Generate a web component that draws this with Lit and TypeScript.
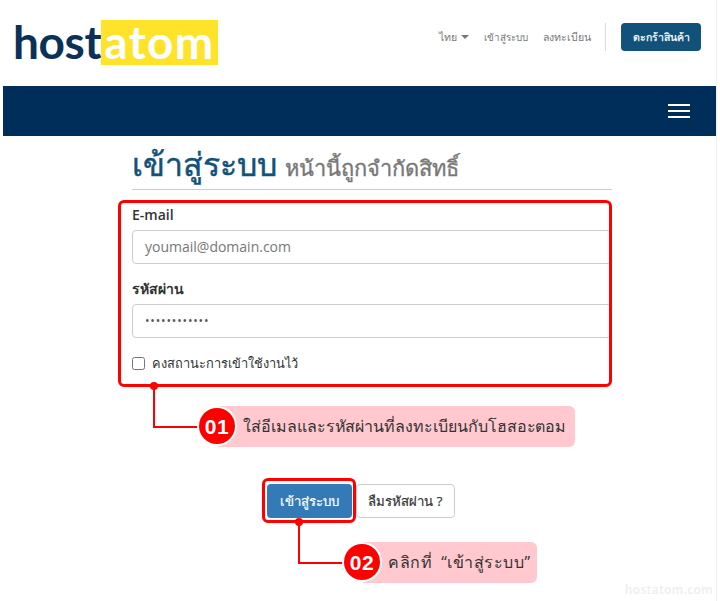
import { LitElement, css, html } from "lit";
import { customElement } from "lit/decorators.js";

@customElement("app-root")
export class AppRoot extends LitElement {
  static styles = css`
    :host {
      display: block;
      position: relative;
      width: 720px;
      height: 601px;
      overflow: hidden;
      background: #fff;
      font-family: "Open Sans", "Noto Sans", sans-serif;
      color: #333;
    }
    .page {
      width: 713px;
      height: 601px;
      margin-left: 3px;
      box-shadow: 1px 0 0 #f0f0f0;
    }
    .top {
      height: 86px;
      display: flex;
      justify-content: space-between;
      align-items: flex-start;
      padding: 0 15px 0 10px;
      box-sizing: border-box;
    }
    .logo {
      display: flex;
      margin-top: 20px;
      font-family: Lato, sans-serif;
      font-weight: 700;
      font-size: 46px;
      line-height: 44px;
      height: 45px;
    }
    .host {
      color: #0b3158;
      width: 88px;
      letter-spacing: -0.4px;
    }
    .atom {
      background: #ffe32b;
      color: #fff;
      width: 117px;
      text-align: center;
      letter-spacing: 1.4px;
    }
    .links {
      display: flex;
      align-items: center;
      margin-top: 23px;
      height: 28px;
      font-size: 10.6px;
      color: #777;
    }
    .links a {
      margin-right: 15px;
    }
    .links a.login {
      font-size: 9.8px;
    }
    .links a.lang {
      display: flex;
      align-items: center;
      gap: 4px;
      margin-right: 15px;
    }
    .caret {
      width: 0;
      height: 0;
      border: 4px solid transparent;
      border-top-color: #777;
      border-bottom: 0;
    }
    .sep {
      width: 1px;
      height: 28px;
      background: #ddd;
      margin: 0 15px 0 -1px;
    }
    .cart {
      width: 80px;
      height: 28px;
      border-radius: 4px;
      background: #12527a;
      color: #fff;
      font-size: 10.5px;
      -webkit-text-stroke: 0.25px #fff;
      display: flex;
      align-items: center;
      justify-content: center;
    }
    .bar {
      height: 50px;
      background: #002e5b;
      display: flex;
      justify-content: flex-end;
      align-items: center;
      padding-right: 26px;
    }
    .burger {
      display: flex;
      flex-direction: column;
      gap: 4px;
      width: 22px;
    }
    .burger i {
      display: block;
      height: 2px;
      background: #fff;
    }
    main {
      width: 480px;
      margin-left: 129px;
    }
    h1 {
      margin: 0;
      height: 53px;
      border-bottom: 1px solid #ccc;
      font-size: 32px;
      font-weight: 400;
      line-height: 56px;
      color: #12527a;
      -webkit-text-stroke: 0.5px #12527a;
      white-space: nowrap;
      overflow: hidden;
    }
    h1 small {
      font-size: 21.8px;
      font-weight: 400;
      color: #777;
      -webkit-text-stroke: 0.35px #777;
    }
    label.field {
      display: block;
      font-size: 14px;
      font-weight: 600;
      line-height: 20px;
      height: 20px;
    }
    .email-label {
      margin-top: 15px;
    }
    .pass-label {
      margin-top: 15px;
    }
    .input {
      margin-top: 5px;
      height: 34px;
      box-sizing: border-box;
      border: 1px solid #ccc;
      border-radius: 4px;
      padding: 0 12px;
      font-size: 14px;
      line-height: 32px;
      color: #777;
    }
    .input.dots {
      color: #555;
      font-size: 12px;
      letter-spacing: 0.85px;
    }
    .remember {
      display: flex;
      align-items: center;
      gap: 7px;
      margin-top: 15px;
      font-size: 12.8px;
      height: 20px;
    }
    .box {
      width: 13px;
      height: 13px;
      box-sizing: border-box;
      border: 1px solid #767676;
      border-radius: 2.5px;
    }
    .actions {
      display: flex;
      gap: 4px;
      margin: 111px 0 0 135px;
    }
    .btn {
      height: 34px;
      box-sizing: border-box;
      border-radius: 4px;
      font-size: 13.2px;
      -webkit-text-stroke: 0.2px;
      display: flex;
      align-items: center;
      justify-content: center;
    }
    .primary {
      width: 85px;
      background: #337ab7;
      color: #fff;
    }
    .secondary {
      width: 99px;
      border: 1px solid #ccc;
    }
    .frame {
      position: absolute;
      box-sizing: border-box;
      border: 3px solid #f00;
      border-radius: 6px;
    }
    .frame-form {
      left: 118px;
      top: 200px;
      width: 494px;
      height: 187px;
    }
    .frame-btn {
      left: 262px;
      top: 478px;
      width: 94px;
      height: 45px;
    }
    .wire {
      position: absolute;
      box-sizing: border-box;
      border-left: 2px solid #f00;
      border-bottom: 2px solid #f00;
    }
    .wire::before {
      content: "";
      position: absolute;
      left: -5px;
      top: -4px;
      width: 8px;
      height: 8px;
      border-radius: 50%;
      background: #f00;
    }
    .wire-1 {
      left: 153px;
      top: 386px;
      width: 50px;
      height: 42px;
    }
    .wire-2 {
      left: 298px;
      top: 522px;
      width: 50px;
      height: 42px;
    }
    .note {
      position: absolute;
      display: flex;
      align-items: center;
      height: 41px;
      background: #ffc9cf;
      border-radius: 0 6px 6px 0;
      font-size: 16px;
      color: #333;
      white-space: pre;
      box-sizing: border-box;
    }
    .note-1 {
      left: 218px;
      top: 406px;
      width: 357px;
      padding-left: 25px;
      letter-spacing: -0.05px;
    }
    .note-2 {
      left: 363px;
      top: 542px;
      width: 174px;
      padding-left: 25px;
      letter-spacing: 0.5px;
    }
    .num {
      position: absolute;
      left: -19px;
      top: 2px;
      width: 36px;
      height: 36px;
      border-radius: 50%;
      background: #f00;
      box-shadow: 0 0 0 2px #fff;
      color: #fff;
      font-family: "Liberation Sans", sans-serif;
      font-weight: 700;
      font-size: 21px;
      letter-spacing: 0.5px;
      line-height: 37px;
      text-align: center;
    }
    .mark {
      position: absolute;
      right: 7px;
      bottom: 3px;
      font-size: 12px;
      font-weight: 600;
      letter-spacing: 0.35px;
      color: #eee;
    }
  `;

  render() {
    return html`
      <div class="page">
        <div class="top">
          <div class="logo">
            <span class="host">host</span>
            <span class="atom">atom</span>
          </div>
          <div class="links">
            <a class="lang">ไทย <span class="caret"></span></a>
            <a class="login">เข้าสู่ระบบ</a>
            <a>ลงทะเบียน</a>
            <span class="sep"></span>
            <span class="cart">ตะกร้าสินค้า</span>
          </div>
        </div>
        <div class="bar">
          <div class="burger"><i></i><i></i><i></i></div>
        </div>
        <main>
          <h1>เข้าสู่ระบบ <small>หน้านี้ถูกจำกัดสิทธิ์</small></h1>
          <label class="field email-label">E-mail</label>
          <div class="input">youmail@domain.com</div>
          <label class="field pass-label">รหัสผ่าน</label>
          <div class="input dots">••••••••••••</div>
          <div class="remember">
            <span class="box"></span>
            <span>คงสถานะการเข้าใช้งานไว้</span>
          </div>
          <div class="actions">
            <span class="btn primary">เข้าสู่ระบบ</span>
            <span class="btn secondary">ลืมรหัสผ่าน ?</span>
          </div>
        </main>
      </div>
      <div class="frame frame-form"></div>
      <div class="frame frame-btn"></div>
      <div class="wire wire-1"></div>
      <div class="wire wire-2"></div>
      <div class="note note-1"><span class="num">01</span>ใส่อีเมลและรหัสผ่านที่ลงทะเบียนกับโฮสอะตอม</div>
      <div class="note note-2"><span class="num">02</span>คลิกที่  “เข้าสู่ระบบ”</div>
      <div class="mark">hostatom.com</div>
    `;
  }
}
